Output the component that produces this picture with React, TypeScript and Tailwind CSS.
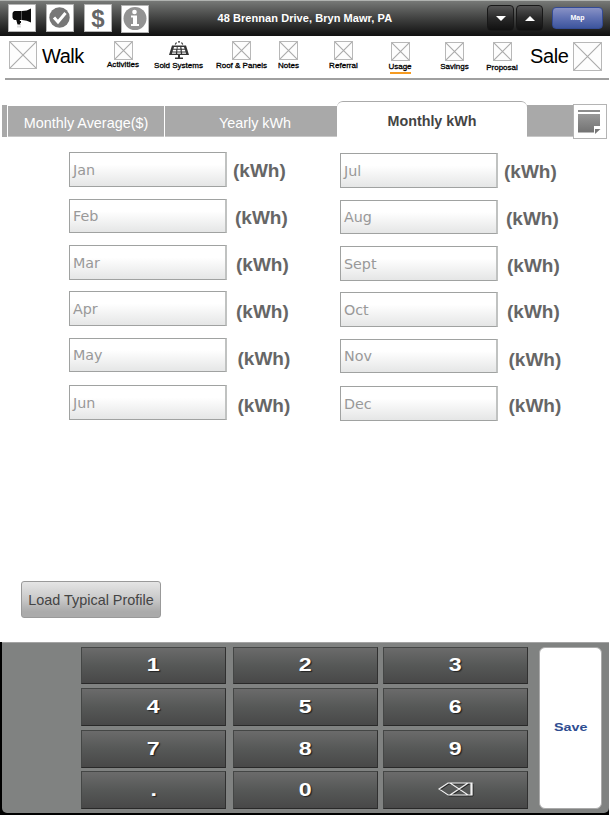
import React from "react";

function Cross({ className }: { className: string }) {
  return (
    <svg viewBox="0 0 20 20" preserveAspectRatio="none" className={`block shrink-0 border-[1.5px] border-[#b8b8b8] bg-[#fdfdfd] ${className}`}>
      <path d="M0 0L20 20M20 0L0 20" fill="none" stroke="#aaa" strokeWidth="1.1" vectorEffect="non-scaling-stroke" />
    </svg>
  );
}

function Solar() {
  return (
    <svg viewBox="0 0 20 19" className="block h-[19px] w-5 shrink-0">
      <path d="M6.200 3.500L7.500 1.500M9 .8h2M12.500 1.500l1.300 2" fill="none" stroke="#333" strokeWidth="1.2" />
      <path d="M3 4.500h14l3 9.500H0z" fill="#333" />
      <path d="M5 6h2.700v1.800H4.500zM8.700 6h2.600v1.800H8.500zM12.300 6H15l.5 1.800h-2.800zM4 8.800h3.200v1.700H3.600zM8.400 8.800h3.200v1.700H8.300zM12.800 8.800H16l.4 1.700h-3.600zM3.200 11.500h3.700v1.200H2.900zM8.200 11.500h3.600v1.200H8.200zM13.100 11.500h3.700l.3 1.200h-4z" fill="white" />
      <path d="M9 14h2v2.500h3v1.500H6v-1.500h3z" fill="#333" />
    </svg>
  );
}

const nav = [
  { label: "Activities", w: "w-[32px]", m: "ml-[23px]", t: "pt-[5px]", gap: "mt-0", ls: "tracking-[0.05px]" },
  { label: "Sold Systems", w: "w-[49px]", m: "ml-[15px]", t: "pt-[5px]", gap: "mt-px", ls: "tracking-[0px]" },
  { label: "Roof & Panels", w: "w-[51px]", m: "ml-[13px]", t: "pt-[5px]", gap: "mt-px", ls: "tracking-[0px]" },
  { label: "Notes", w: "w-[21px]", m: "ml-[11px]", t: "pt-[5px]", gap: "mt-px", ls: "tracking-[0px]" },
  { label: "Referral", w: "w-[29px]", m: "ml-[30px]", t: "pt-[5px]", gap: "mt-px", ls: "tracking-[0.05px]" },
  { label: "Usage", w: "w-[22px]", m: "ml-[31px]", t: "pt-[6px]", gap: "mt-px", ls: "tracking-[-0.05px]" },
  { label: "Savings", w: "w-[29px]", m: "ml-[29px]", t: "pt-[6px]", gap: "mt-px", ls: "tracking-[0px]" },
  { label: "Proposal", w: "w-[32px]", m: "ml-[17px]", t: "pt-[6px]", gap: "mt-[2px]", ls: "tracking-[0px]" },
];

const left = [
  ["Jan", "mt-0 h-[35px]", "ml-[6px] pt-[2px]"],
  ["Feb", "mt-[12px] h-[34px]", "ml-[8px] pt-[3px]"],
  ["Mar", "mt-[12px] h-[35px]", "ml-[9px] pt-[4px]"],
  ["Apr", "mt-[11px] h-[35px]", "ml-[9px] pt-[5px]"],
  ["May", "mt-[12px] h-[34px]", "ml-[10.500px] pt-[7px]"],
  ["Jun", "mt-[13px] h-[35px]", "ml-[10.500px] pt-[5px]"],
];
const right = [
  ["Jul", "mt-[1px] h-[35px]", "ml-[6px] pt-[2px]"],
  ["Aug", "mt-[12px] h-[34px]", "ml-[8px] pt-[3px]"],
  ["Sept", "mt-[12px] h-[35px]", "ml-[9px] pt-[3px]"],
  ["Oct", "mt-[11px] h-[35px]", "ml-[9px] pt-[4px]"],
  ["Nov", "mt-[12px] h-[34px]", "ml-[10.500px] pt-[6px]"],
  ["Dec", "mt-[13px] h-[35px]", "ml-[10.500px] pt-[4px]"],
];

function Column({ rows, className }: { rows: string[][]; className: string }) {
  return (
    <div className={`flex w-[225px] flex-col ${className}`}>
      {rows.map(([name, row, gap]) => (
        <div key={name} className={`flex items-center ${row}`}>
          <div className="flex h-full w-[158px] shrink-0 items-center border border-[#a0a2a1] border-r-2 border-r-[#c0c2c1] bg-gradient-to-b from-white from-35% to-[#e5e6e6] pt-px pl-[3px] font-['DejaVu_Sans',sans-serif] text-[14.300px] leading-none text-[#999]">
            {name}
          </div>
          <span className={`text-[19px] leading-none font-bold whitespace-nowrap text-[#666] ${gap}`}>(kWh)</span>
        </div>
      ))}
    </div>
  );
}

const keyRows = [
  { h: "h-[37px]", m: "mt-0", keys: ["1", "2", "3"] },
  { h: "h-[38px]", m: "mt-[4px]", keys: ["4", "5", "6"] },
  { h: "h-[38px]", m: "mt-[4px]", keys: ["7", "8", "9"] },
  { h: "h-[38px]", m: "mt-[3px]", keys: [".", "0", "del"] },
];
const keyGap = ["ml-0", "ml-[7px]", "ml-[5px]"];

const iconBox = "block h-7 w-7 shrink-0 border border-[#b5b5b5] bg-white";

export default function App() {
  return (
    <div className="flex h-[815px] w-[611px] flex-col overflow-hidden bg-white font-['Liberation_Sans',Arial,sans-serif]">
      <header className="flex h-9 w-[610px] shrink-0 items-start border-t border-[#b0b3b0] bg-gradient-to-b from-[#777977] to-[#111] pl-2">
        <svg viewBox="0 0 26 26" className={`mt-[3px] ${iconBox}`}>
          <path d="M3.500 8.500q0-2 2-2.500h7.500q5 0 9-2.500v14q-4-2.500-9-2.500H5.500q-1.500-.3-2-2.500z" fill="#0b0b0b" />
          <path d="M7 14h3.500l.5 2h1v2h-1l.5 1.500H8.500z" fill="#0b0b0b" />
          <path d="M12.500 6v9" stroke="#777" strokeWidth=".7" />
          <path d="M8 21.500h4" stroke="#ddd" strokeWidth="2" />
        </svg>
        <svg viewBox="0 0 26 26" className={`mt-[3px] ml-[10px] ${iconBox}`}>
          <circle cx="12.500" cy="12.500" r="10.200" fill="#777" />
          <path d="M7 12.500l4 4.500 7.500-9" fill="none" stroke="white" strokeWidth="3" />
        </svg>
        <div className={`mt-[3px] ml-[10px] ${iconBox} text-center text-[24px] leading-[27px] font-bold text-[#666]`}>$</div>
        <svg viewBox="0 0 26 26" className={`mt-[4px] ml-[9px] ${iconBox}`}>
          <circle cx="13" cy="12.500" r="11.500" fill="#939393" />
          <circle cx="12.500" cy="6" r="2.300" fill="white" />
          <path d="M9 9.500h6v8.500h2v2H9v-2h2v-6.500H9z" fill="white" />
        </svg>
        <div className="ml-[68.500px] w-[175px] shrink-0 pt-[11px] text-[11px] leading-[13px] font-bold tracking-[0.06px] whitespace-nowrap text-white">48 Brennan Drive, Bryn Mawr, PA</div>
        <div className="mt-[4px] ml-[94.500px] flex h-[26px] w-[27px] shrink-0 items-center justify-center rounded-[4px] border border-[#181818] bg-gradient-to-b from-[#555] via-[#292929] to-[#111]">
          <svg viewBox="0 0 10 5" className="h-[5px] w-[10px]"><path d="M0 0h10L5 5z" fill="white" /></svg>
        </div>
        <div className="mt-[4px] ml-[2px] flex h-[26px] w-[27px] shrink-0 items-center justify-center rounded-[4px] border border-[#181818] bg-gradient-to-b from-[#555] via-[#292929] to-[#111]">
          <svg viewBox="0 0 10 5" className="h-[5px] w-[10px]"><path d="M0 5h10L5 0z" fill="white" /></svg>
        </div>
        <div className="mt-[6px] ml-[9px] flex h-[22px] w-[51px] shrink-0 items-center justify-center rounded-[4px] border border-[#344b94] bg-gradient-to-b from-[#8992c5] via-[#6071b3] to-[#3d559d] text-[7px] font-bold text-white">Map</div>
      </header>

      <nav className="flex h-[42px] shrink-0 items-start pl-[9px]">
        <Cross className="mt-[5px] h-7 w-7" />
        <span className="ml-[5px] w-[42px] shrink-0 pt-[9px] text-[20px] leading-[23px] tracking-[-0.500px] text-black">Walk</span>
        {nav.map((n) => (
          <div key={n.label} className={`flex shrink-0 flex-col items-center ${n.w} ${n.m} ${n.t}`}>
            {n.label === "Sold Systems" ? <Solar /> : <Cross className="h-[19px] w-[19px]" />}
            <span className={`text-[8px] leading-[9px] whitespace-nowrap text-black [-webkit-text-stroke:0.3px_black] ${n.gap} ${n.ls}`}>{n.label}</span>
            {n.label === "Usage" && <span className="mt-px h-[2px] w-[21px] shrink-0 bg-[#f59b22]" />}
          </div>
        ))}
        <span className="ml-[12px] w-[38px] shrink-0 pt-[9px] text-[20px] leading-[23px] tracking-[-0.4px] text-black">Sale</span>
        <Cross className="mt-[6px] ml-[5px] h-[29px] w-[29px]" />
      </nav>
      <div className="ml-[5px] h-[2px] w-[604px] shrink-0 bg-[#a0a0a0]" />

      <div className="mt-[21px] flex h-[38px] shrink-0 items-start pl-[2px]">
        <div className="mt-[4px] h-[32px] w-[5px] bg-[#a9a9a9]" />
        <div className="mt-[5px] ml-px flex h-[31px] w-[156px] items-center justify-center border-b border-[#c7c7c7] bg-[#a9a9a9] pt-[5px] text-[14.400px] text-white">Monthly Average($)</div>
        <div className="mt-[5px] ml-px flex h-[31px] w-[172px] items-center justify-center border-b border-[#c7c7c7] bg-[#a9a9a9] pt-[5px] pl-[8px] text-[14.400px] text-white">Yearly kWh</div>
        <div className="flex h-[36px] w-[190px] items-center justify-center rounded-t-[6px] border-t border-[#aaa] bg-white pt-[4px] text-[14.300px] font-bold text-[#444]">Monthly kWh</div>
        <div className="mt-[4px] h-[32px] w-[46px] border-b border-[#c7c7c7] bg-[#a9a9a9]" />
        <svg viewBox="0 0 32 33" className="mt-[3px] h-[35px] w-[34px] border border-[#b4b4b4] bg-white">
          <defs><linearGradient id="note" x1="0" y1="0" x2="0" y2="1"><stop stopColor="#a0a0a0" /><stop offset="1" stopColor="#727272" /></linearGradient></defs>
          <path d="M4 5h22v2H4zM4 9h22v12h-6v6.500H4z" fill="url(#note)" />
          <path d="M4 5h22v2H4z" fill="#8c8c8c" />
          <path d="M21 24h5.500l-5.500 5z" fill="#777" />
        </svg>
      </div>

      <main className="flex h-[503px] shrink-0 flex-col pt-[13px]">
        <div className="flex items-start pl-[69px]">
          <Column rows={left} className="" />
          <Column rows={right} className="ml-[46px]" />
        </div>
        <div className="mt-[160px] ml-[21px] flex h-[37px] w-[140px] shrink-0 items-center justify-center rounded-[3px] border-[1.5px] border-[#999] bg-gradient-to-b from-[#e5e5e5] via-[#c8c8c8] via-50% to-[#aaa] to-85% pt-[2px] text-[14.400px] whitespace-nowrap text-[#444]">Load Typical Profile</div>
      </main>

      <section className="w-[609px] grow bg-black pb-[2px] pl-[2px]">
        <div className="flex h-full items-start rounded-b-[5px] border-t border-[#a4a4a4] bg-[#808281] pt-[4px] pl-[79px]">
          <div className="flex w-[447px] shrink-0 flex-col">
            {keyRows.map((r) => (
              <div key={r.keys[0]} className={`flex ${r.h} ${r.m}`}>
                {r.keys.map((k, i) => (
                  <div key={k} className={`flex h-full w-[145px] shrink-0 items-center justify-center border border-t-[#444645] border-r-[#303030] border-b-[#292929] border-l-[#444645] bg-gradient-to-b from-[#6b6b6b] via-[#565857] to-[#484848] pb-[2px] ${keyGap[i]}`}>
                    {k === "del" ? (
                      <svg viewBox="0 0 36 16" className="h-4 w-9">
                        <path d="M1 8L10 2h24v12H10zM12 2l18 12M30 2L12 14" fill="none" stroke="#222" strokeWidth="1" transform="translate(1 1)" />
                        <path d="M1 8L10 2h24v12H10zM12 2l18 12M30 2L12 14M33 2v12" fill="none" stroke="#f2f2f2" strokeWidth="1.200" />
                      </svg>
                    ) : (
                      <span className="scale-x-[1.22] text-[19px] leading-none font-bold text-white [text-shadow:1px_1px_1px_#222]">{k}</span>
                    )}
                  </div>
                ))}
              </div>
            ))}
          </div>
          <div className="ml-[11px] flex h-[162px] w-[63px] shrink-0 items-center justify-center rounded-[6px] border border-[#aaa] bg-white">
            <span className="scale-x-[1.43] text-[10px] leading-none font-bold text-[#2e4d91]">Save</span>
          </div>
        </div>
      </section>
    </div>
  );
}
